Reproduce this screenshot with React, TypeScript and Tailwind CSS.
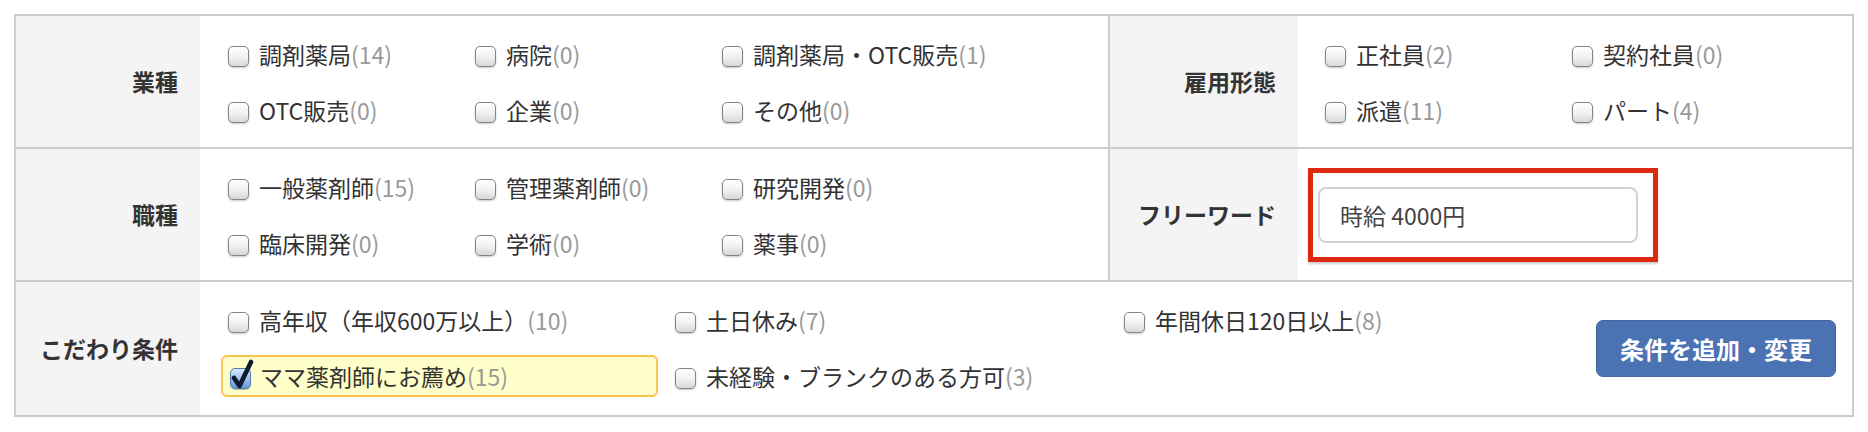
import React from 'react';

type ItemProps = { label: string; count: number; checked?: boolean };

function Box({ checked }: { checked?: boolean }) {
  if (checked) {
    return (
      <span className="relative inline-block h-[21px] w-[21px] shrink-0 translate-y-[2px] rounded-[5px] border border-[#5479ad] bg-gradient-to-b from-[#dbeafc] to-[#6399dc] shadow-[0_1px_1px_rgba(0,0,0,0.25)]">
        <svg className="absolute -left-[1px] -top-[10px] h-[30px] w-[26px]" viewBox="0 0 26 30">
          <path d="M4 19 L9.5 27 L21 3" fill="none" stroke="#111b30" strokeWidth="4.6" strokeLinecap="round" strokeLinejoin="round" />
        </svg>
      </span>
    );
  }
  return (
    <span className="inline-block h-[21px] w-[21px] shrink-0 translate-y-[2px] rounded-[5px] border border-[#858585] bg-gradient-to-b from-white via-[#f2f2f2] to-[#d8d8d8] shadow-[0_1px_2px_rgba(0,0,0,0.22)]" />
  );
}

function Item({ label, count, checked }: ItemProps) {
  return (
    <label className="flex h-[40px] items-center gap-[10px] whitespace-nowrap">
      <Box checked={checked} />
      <span className="text-[#333]">
        {label}
        <span className="text-[#999]">({count})</span>
      </span>
    </label>
  );
}

function Label({ children }: { children: React.ReactNode }) {
  return (
    <div className="flex items-center justify-end bg-[#f4f4f4] pr-[22px] text-[23px] font-bold text-[#333]">
      {children}
    </div>
  );
}

const GYOSHU: ItemProps[] = [
  { label: '調剤薬局', count: 14 },
  { label: '病院', count: 0 },
  { label: '調剤薬局・OTC販売', count: 1 },
  { label: 'OTC販売', count: 0 },
  { label: '企業', count: 0 },
  { label: 'その他', count: 0 },
];

const KOYO: ItemProps[] = [
  { label: '正社員', count: 2 },
  { label: '契約社員', count: 0 },
  { label: '派遣', count: 11 },
  { label: 'パート', count: 4 },
];

const SHOKUSHU: ItemProps[] = [
  { label: '一般薬剤師', count: 15 },
  { label: '管理薬剤師', count: 0 },
  { label: '研究開発', count: 0 },
  { label: '臨床開発', count: 0 },
  { label: '学術', count: 0 },
  { label: '薬事', count: 0 },
];

export default function App() {
  return (
    <div className="h-[432px] w-[1868px] bg-white pl-[14px] pt-[14px] font-['Noto_Sans_CJK_JP',sans-serif] text-[23px]">
      <div className="w-[1840px] border-2 border-[#cccccc]">
        {/* 業種 / 雇用形態 */}
        <div className="grid h-[133px] grid-cols-[184px_908px_190px_1fr] border-b-2 border-[#cccccc]">
          <Label>業種</Label>
          <div className="grid grid-cols-[247px_247px_1fr] gap-y-[16px] self-start pl-[28px] pt-[18px]">
            {GYOSHU.map((it) => <Item key={it.label} {...it} />)}
          </div>
          <div className="flex border-l-2 border-[#cccccc]">
            <div className="flex w-full items-center justify-end bg-[#f4f4f4] pr-[22px] text-[23px] font-bold text-[#333]">雇用形態</div>
          </div>
          <div className="grid grid-cols-[247px_1fr] gap-y-[16px] self-start pl-[27px] pt-[18px]">
            {KOYO.map((it) => <Item key={it.label} {...it} />)}
          </div>
        </div>

        {/* 職種 / フリーワード */}
        <div className="grid h-[133px] grid-cols-[184px_908px_190px_1fr] border-b-2 border-[#cccccc]">
          <Label>職種</Label>
          <div className="grid grid-cols-[247px_247px_1fr] gap-y-[16px] self-start pl-[28px] pt-[18px]">
            {SHOKUSHU.map((it) => <Item key={it.label} {...it} />)}
          </div>
          <div className="flex border-l-2 border-[#cccccc]">
            <div className="flex w-full items-center justify-end bg-[#f4f4f4] pr-[22px] text-[23px] font-bold text-[#333]">フリーワード</div>
          </div>
          <div className="flex items-center pl-[10px]">
            <div className="border-[5px] border-[#dc2a10] py-[14px] pl-[5px] pr-[15px] shadow-[0_2px_2px_rgba(0,0,0,0.2)]">
              <input
                readOnly
                value="時給 4000円"
                className="h-[56px] w-[320px] rounded-[8px] border-2 border-[#d2d2d2] bg-white pl-[20px] text-[23px] text-[#444] outline-none"
              />
            </div>
          </div>
        </div>

        {/* こだわり条件 */}
        <div className="grid h-[133px] grid-cols-[184px_1fr]">
          <Label>こだわり条件</Label>
          <div className="flex items-center">
            <div className="grid grid-cols-[447px_449px_auto] gap-y-[16px] self-start pl-[28px] pt-[18px]">
              <Item label="高年収（年収600万以上）" count={10} />
              <Item label="土日休み" count={7} />
              <Item label="年間休日120日以上" count={8} />
              <div className="-my-[1px] -ml-[7px] flex h-[42px] w-[437px] items-center rounded-[6px] border-2 border-[#f7c84e] bg-[#ffffca] pl-[7px]">
                <label className="flex items-center gap-[9px] whitespace-nowrap">
                  <Box checked />
                  <span className="text-[#333]">
                    ママ薬剤師にお薦め<span className="text-[#999]">(15)</span>
                  </span>
                </label>
              </div>
              <Item label="未経験・ブランクのある方可" count={3} />
            </div>
            <button className="ml-auto mr-[16px] h-[57px] w-[240px] rounded-[7px] border border-[#44679f] bg-[#4b72b2] text-[24px] font-bold text-white">
              条件を追加・変更
            </button>
          </div>
        </div>
      </div>
    </div>
  );
}
